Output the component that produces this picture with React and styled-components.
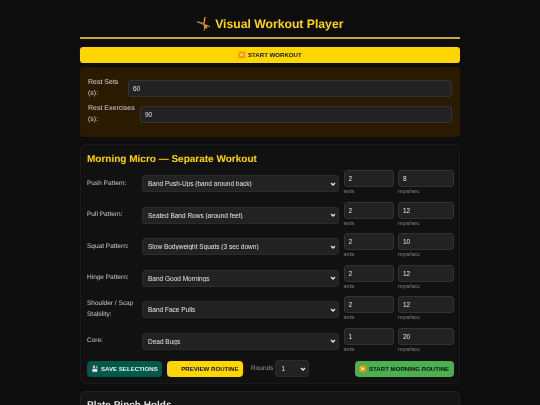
import React from 'react';
import styled, { createGlobalStyle } from 'styled-components';

const chevron = "url(\"data:image/svg+xml,%3Csvg xmlns='http://www.w3.org/2000/svg' width='8' height='8' viewBox='0 0 8 8'%3E%3Cpath d='M2 3 4 5l2-2' fill='none' stroke='%23e8e8e8' stroke-width='1.3'/%3E%3C/svg%3E\")";

const GlobalStyle = createGlobalStyle`
html, body { margin: 0; padding: 0; background: #0d0d0d; overflow: hidden; }
body { font-family: "Liberation Sans", Arial, sans-serif; color: #e0e0e0; }
* { box-sizing: border-box; }
`;

const Page = styled.div`
  width: 380px;
  margin: 0 auto;
  height: 405px;
  overflow: hidden;
  padding-top: 16px;
  will-change: transform;
  text-rendering: geometricPrecision;
`;
const Title = styled.h1`
  margin: 0;
  height: 21px;
  color: #ffd700;
  font-size: 12.2px;
  line-height: 16px;
  font-weight: 700;
  text-align: center;
`;
const Rule = styled.div`
  height: 2px;
  background: #c9a93c;
`;
const StartButton = styled.button`
  display: block;
  width: 100%;
  height: 15.5px;
  margin-top: 8px;
  padding: 0;
  border: 0;
  border-radius: 3px;
  background: #ffd700;
  color: #111;
  font: 700 6.1px "Liberation Sans", sans-serif;
`;
const RestPanel = styled.section`
  margin-top: 4px;
  height: 70.5px;
  padding: 11.5px 8px 0;
  border-radius: 4px;
  background: #2a1a00;
  display: flex;
  flex-direction: column;
  gap: 5px;
`;
const RestRow = styled.label`
  display: flex;
  align-items: center;
  gap: 5px;
  font-size: 7px;
  line-height: 10.5px;
  color: #d4d4d4;
`;
const RestLabel = styled.span`
  width: ${p => p.$w}px;
  flex: none;
`;
const Field = styled.input`
  height: 17px;
  min-width: 0;
  width: 100%;
  padding: 0 4px;
  border: 1px solid #333;
  border-radius: 3px;
  background: #222;
  color: #e8e8e8;
  font: 6.5px "Liberation Sans", sans-serif;
  outline: none;
`;
const Card = styled.section`
  margin-top: 7px;
  height: 240px;
  padding: 8px 5px 0 6px;
  border: 1px solid #191919;
  border-radius: 5px;
  background: #111;
`;
const CardTitle = styled.h2`
  margin: 0 0 2px;
  color: #ffd700;
  font-size: 10px;
  line-height: 13px;
  font-weight: 700;
`;
const ExerciseRow = styled.div`
  display: grid;
  grid-template-columns: 50.5px 197px 50px 56px;
  column-gap: 4.5px;
  height: 31.5px;
  align-items: center;
`;
const RowLabel = styled.label`
  font-size: 6.5px;
  line-height: 10.5px;
  color: #ccc;
`;
const Picker = styled.select`
  appearance: none;
  height: 17px;
  width: 100%;
  padding: 0 5px;
  border: 1px solid #2b2b2b;
  border-radius: 3px;
  background: #222 ${chevron} no-repeat right 1px center;
  color: #e8e8e8;
  font: 6.5px "Liberation Sans", sans-serif;
  outline: none;
`;
const NumberCell = styled.div`
  display: flex;
  flex-direction: column;
  margin-bottom: 2px;
`;
const Hint = styled.small`
  margin-top: 2px;
  font-size: 5.8px;
  line-height: 6px;
  color: #888;
`;
const Actions = styled.div`
  display: flex;
  align-items: center;
  gap: 5px;
  margin-top: 3px;
`;
const ActionButton = styled.button`
  height: 16px;
  padding: 0;
  width: ${p => p.$w}px;
  border: 0;
  border-radius: 4px;
  background: ${p => p.$bg};
  color: ${p => p.$fg};
  font: 700 6.1px "Liberation Sans", sans-serif;
  white-space: nowrap;
`;
const RoundsLabel = styled.span`
  margin-left: 3px;
  font-size: 6.5px;
  line-height: 10px;
  padding-top: 1px;
  color: #999;
`;
const RoundsPicker = styled(Picker)`
  width: 34px;
  margin-left: -3px;
`;
const Spacer = styled.div`
  flex: 1;
`;
const NextCard = styled(Card)`
  margin-top: 7px;
  padding-top: 7px;
  border-color: #222;
  background: #151515;
`;
const NextTitle = styled.h2`
  margin: 0;
  color: #ddd;
  font-size: 10px;
  line-height: 13px;
`;

const rows = [
  ['Push Pattern:', 'Band Push-Ups (band around back)', 2, 8],
  ['Pull Pattern:', 'Seated Band Rows (around feet)', 2, 12],
  ['Squat Pattern:', 'Slow Bodyweight Squats (3 sec down)', 2, 10],
  ['Hinge Pattern:', 'Band Good Mornings', 2, 12],
  ['Shoulder / Scap Stability:', 'Band Face Pulls', 2, 12],
  ['Core:', 'Dead Bugs', 1, 20],
];

export default function App() {
  return (
    <Page>
      <GlobalStyle />
      <Title>🤸 Visual Workout Player</Title>
      <Rule />
      <StartButton>▶️ START WORKOUT</StartButton>
      <RestPanel>
        <RestRow>
          <RestLabel $w={35}>Rest Sets (s):</RestLabel>
          <Field defaultValue="60" />
        </RestRow>
        <RestRow>
          <RestLabel $w={47}>Rest Exercises (s):</RestLabel>
          <Field defaultValue="90" />
        </RestRow>
      </RestPanel>
      <Card>
        <CardTitle>Morning Micro — Separate Workout</CardTitle>
        {rows.map(([label, choice, sets, reps]) => (
          <ExerciseRow key={label}>
            <RowLabel>{label}</RowLabel>
            <Picker defaultValue={choice}>
              <option>{choice}</option>
            </Picker>
            <NumberCell>
              <Field defaultValue={sets} />
              <Hint>sets</Hint>
            </NumberCell>
            <NumberCell>
              <Field defaultValue={reps} />
              <Hint>reps/sec</Hint>
            </NumberCell>
          </ExerciseRow>
        ))}
        <Actions>
          <ActionButton $w={75} $bg="#00594a" $fg="#eee">💾 SAVE SELECTIONS</ActionButton>
          <ActionButton $w={76} $bg="#ffd700" $fg="#111">⚡ PREVIEW ROUTINE</ActionButton>
          <RoundsLabel>Rounds</RoundsLabel>
          <RoundsPicker defaultValue="1">
            <option>1</option>
          </RoundsPicker>
          <Spacer />
          <ActionButton $w={99.5} $bg="#4caf50" $fg="#111">▶️ START MORNING ROUTINE</ActionButton>
        </Actions>
      </Card>
      <NextCard>
        <NextTitle>Plate Pinch Holds</NextTitle>
      </NextCard>
    </Page>
  );
}
